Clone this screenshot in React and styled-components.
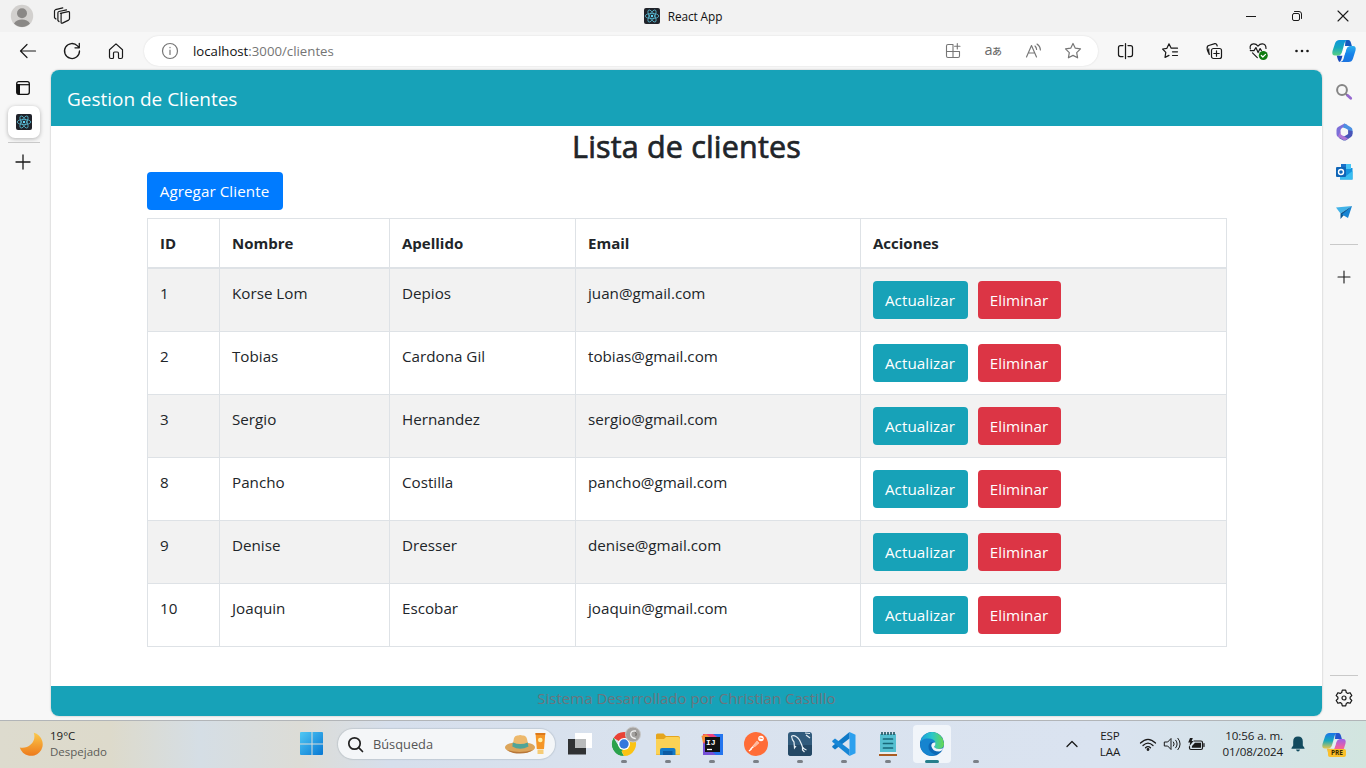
import React from "react";
import styled, { createGlobalStyle } from "styled-components";

const GlobalStyle = createGlobalStyle`
  *, *::before, *::after { box-sizing: border-box; }
  body {
    margin: 0;
    font-family: "Open Sans", "Noto Sans", sans-serif;
    color: #212529;
    overflow: hidden;
  }
  svg { display: block; flex: none; overflow: visible; }
  h2, p { margin: 0; }
`;

const Screen = styled.div`
  width: 1366px;
  height: 768px;
  display: flex;
  flex-direction: column;
  background: #f7f7f7;
  white-space: nowrap;
`;

/* ---------- browser chrome ---------- */

const TitleBar = styled.header`
  height: 32px;
  flex: none;
  display: grid;
  grid-template-columns: 1fr auto 1fr;
  align-items: center;
  background: #f2f2f2;
`;

const TitleLeft = styled.div`
  display: flex;
  align-items: center;
  gap: 19px;
  padding-left: 10px;
`;

const TitleCenter = styled.div`
  display: flex;
  align-items: center;
  gap: 8px;
  font-size: 11.8px;
  letter-spacing: -0.08px;
  color: #111;
`;

const WindowControls = styled.div`
  display: flex;
  justify-content: flex-end;
`;

const IconSlot = styled.span`
  width: ${(p) => p.$w || 44}px;
  height: ${(p) => (p.$h ? `${p.$h}px` : "auto")};
  flex: none;
  display: flex;
  align-items: center;
  justify-content: center;
`;

const ToolBar = styled.nav`
  height: 38px;
  flex: none;
  display: flex;
  align-items: center;
  padding-left: 6px;
`;

const AddressBar = styled.div`
  width: 954px;
  height: 30px;
  margin: 0 6px;
  display: flex;
  align-items: center;
  padding: 0 5px 0 18px;
  border-radius: 15px;
  background: #fff;
  box-shadow: 0 0 2px rgba(0, 0, 0, 0.12);
`;

const Url = styled.span`
  flex: 1;
  margin-left: 15px;
  font-size: 13.2px;
  letter-spacing: 0.01px;
  color: #757575;
  b { font-weight: 400; color: #111; }
`;

const Middle = styled.div`
  height: 650px;
  flex: none;
  display: flex;
`;

const LeftRail = styled.aside`
  width: 51px;
  padding: 10px 3px 0 0;
  display: flex;
  flex-direction: column;
  align-items: center;
`;

const RailIcon = styled.span`
  height: ${(p) => p.$h}px;
  margin-right: 2px;
  display: flex;
  align-items: center;
`;

const ActiveTab = styled.div`
  width: 32px;
  height: 32px;
  margin: 10px 0 4px;
  display: flex;
  align-items: center;
  justify-content: center;
  border-radius: 7px;
  background: #fff;
  box-shadow: 0 1px 4px rgba(0, 0, 0, 0.28);
`;

const Divider = styled.div`
  width: ${(p) => p.$w}px;
  height: 1px;
  flex: none;
  background: #c9c9c9;
`;

const RightRail = styled.aside`
  width: 44px;
  display: flex;
  flex-direction: column;
  align-items: center;
  padding-top: 2px;
`;

const Spacer = styled.div`
  flex: 1;
`;

/* ---------- web page ---------- */

const Page = styled.main`
  width: 1271px;
  height: 646px;
  display: flex;
  flex-direction: column;
  border-radius: 8px;
  overflow: hidden;
  background: #fff;
  box-shadow: 0 0 2px rgba(0, 0, 0, 0.3);
`;

const NavBar = styled.div`
  height: 56px;
  flex: none;
  padding: 0 16px;
  line-height: 58px;
  font-size: 19px;
  letter-spacing: -0.02px;
  color: #fff;
  background: #17a2b8;
`;

const Container = styled.section`
  width: 1080px;
  margin: 0 auto;
  flex: 1;
`;

const Heading = styled.h2`
  height: 46px;
  line-height: 41px;
  text-align: center;
  font-size: 30.5px;
  letter-spacing: 0.17px;
  font-weight: 500;
  -webkit-text-stroke: 0.7px #212529;
`;

const tones = { primary: "#007bff", info: "#17a2b8", danger: "#dc3545" };

const Button = styled.button`
  width: ${(p) => p.$w}px;
  height: 38px;
  padding: 0;
  border: 0;
  border-radius: 4px;
  background: ${(p) => tones[p.$tone]};
  color: #fff;
  font: 400 15.2px/39px "Open Sans", "Noto Sans", sans-serif;
  letter-spacing: 0.07px;
  display: block;
  text-align: center;
`;

const Actions = styled.div`
  display: flex;
  gap: 10px;
`;

const Table = styled.table`
  width: 1080px;
  margin-top: 8px;
  table-layout: fixed;
  border-collapse: separate;
  border-spacing: 0;
  border: solid #dee2e6;
  border-width: 1px 0 0 1px;
  font-size: 15.2px;
  line-height: 24px;
`;

const Th = styled.th`
  width: ${(p) => p.$w}px;
  height: 50px;
  padding: 12px 12px 12px 12.5px;
  text-align: left;
  vertical-align: top;
  font-weight: 700;
  font-size: 15px;
  border: solid #dee2e6;
  border-width: 0 1px 2px 0;
`;

const Td = styled.td`
  height: 63px;
  padding: 12px 12px 12px 12.5px;
  vertical-align: top;
  border: solid #dee2e6;
  border-width: 0 1px 1px 0;
  &:last-child { padding-left: 12px; }
`;

const Tr = styled.tr`
  &:nth-child(odd) { background: #f2f2f2; }
`;

const PageFooter = styled.footer`
  height: 30px;
  flex: none;
  line-height: 25px;
  text-align: center;
  font-size: 15px;
  color: #6c757d;
  background: #17a2b8;
`;

/* ---------- taskbar ---------- */

const TaskBar = styled.footer`
  height: 48px;
  flex: none;
  display: flex;
  align-items: center;
  padding-bottom: 1px;
  border-top: 1px solid #b2b5b8;
  background: linear-gradient(90deg, #dddbce 0, #dddacb 110px, #d5dee5 200px, #dcdcd6 300px, #d6dfec 390px, #d9e2ee 640px, #dae3f0 1100px, #d5e3e9 1240px, #d2e5df 1366px);
`;

const Weather = styled.div`
  width: 290px;
  display: flex;
  align-items: center;
  padding-left: 19px;
  gap: 7px;
  font-size: 11.5px;
  line-height: 16px;
  color: #1b1b1b;
  span { display: block; color: #5c5c58; }
`;

const SearchBox = styled.div`
  width: 217px;
  height: 30px;
  margin: 0 3px 0 4px;
  display: flex;
  align-items: center;
  padding: 0 8px 0 10px;
  border-radius: 15px;
  background: #f4f6f8;
  box-shadow: 0 0 1px 1px rgba(120, 130, 140, 0.22);
  font-size: 12.8px;
  color: #555;
  span { flex: 1; margin-left: 10px; }
`;

const DockItem = styled.div`
  width: 38px;
  height: 38px;
  margin: 0 3px;
  position: relative;
  display: flex;
  align-items: center;
  justify-content: center;
  border-radius: 4px;
  background: ${(p) => (p.$active ? "#f1f5fa" : "transparent")};
  &::after {
    content: "";
    position: absolute;
    bottom: 0;
    left: 50%;
    width: ${(p) => (p.$active ? 14 : 6)}px;
    height: 3px;
    transform: translateX(-50%);
    border-radius: 2px;
    background: ${(p) => (p.$active ? "#257f8c" : "#7b8087")};
    display: ${(p) => (p.$idle ? "none" : "block")};
  }
`;

const Tray = styled.div`
  flex: 1;
  display: flex;
  align-items: center;
  justify-content: flex-end;
  padding-right: 20px;
  color: #1b1b1b;
`;

const TrayChevron = styled.span`
  margin-right: 2px;
`;

const TrayText = styled.div`
  width: ${(p) => p.$w}px;
  text-align: ${(p) => p.$align};
  font-size: 11.6px;
  letter-spacing: -0.1px;
  line-height: 16px;
`;

/* ---------- icons ---------- */

const Line = ({ w = 16, h = w, vb, c = "#1a1a1a", sw = 1, children }) => (
  <svg width={w} height={h} viewBox={vb || `0 0 ${w} ${h}`} fill="none" stroke={c} strokeWidth={sw} strokeLinecap="round" strokeLinejoin="round">
    {children}
  </svg>
);

const Avatar = () => (
  <svg width="24" height="24" viewBox="0 0 24 24">
    <circle cx="12" cy="12" r="11.2" fill="#d2d0ce" />
    <circle cx="12" cy="9.3" r="5" fill="#8a8886" />
    <path d="M4 19.6C5.5 16.7 8.6 15.6 12 15.6s6.5 1.1 8 4A11.2 11.2 0 0 1 4 19.6Z" fill="#8a8886" />
  </svg>
);

const Workspaces = () => (
  <Line w={18} sw={1.2}>
    <path d="M7.2 6.8 15 5q1.3-.2 1.3 1v6q0 1-.9 1.5l-6.2 3Q8 17 7.9 15.800V8q0-1 .9-1.300" transform="translate(.2 -.4)" />
    <path d="M6 14.500 4.900 13.500V5.800q0-1 1-1.300L13.500 2.800" />
    <path d="M3 12 1.500 10.800V4q0-1 1-1.300L9.800.8" />
  </Line>
);

const ReactLogo = () => (
  <svg width="16" height="16" viewBox="0 0 16 16" fill="none" stroke="#58b8d0" strokeWidth=".8">
    <rect width="16" height="16" rx="2" fill="#20232a" stroke="none" />
    <ellipse cx="8" cy="8" rx="6.800" ry="2.600" />
    <ellipse cx="8" cy="8" rx="6.800" ry="2.600" transform="rotate(60 8 8)" />
    <ellipse cx="8" cy="8" rx="6.800" ry="2.600" transform="rotate(120 8 8)" />
    <circle cx="8" cy="8" r="1.200" fill="#61dafb" stroke="none" />
  </svg>
);

const Minimize = () => <Line w={10}><path d="M0 5.500h10" strokeLinecap="butt" /></Line>;
const Restore = () => (
  <Line w={10}>
    <rect x=".5" y="2.500" width="7" height="7" rx="1.500" />
    <path d="M2.500.500H7Q9.500.500 9.500 3v4.500" />
  </Line>
);
const Close = () => <Line w={10} sw={1.1}><path d="m0 0 10 10M10 0 0 10" /></Line>;

const Back = () => <Line sw={1.2}><path d="M15.500 8H.500M7 1.500.500 8 7 14.500" /></Line>;
const Refresh = () => <Line sw={1.300}><path d="M15.500 8A7.500 7.500 0 1 1 13.500 2.900L15.300 4.800M15.300.500v4.300H11" /></Line>;
const HomeIcon = () => (
  <Line sw={1.200}><path d="M1.500 6.800 8 .900l6.500 5.900v7.200q0 1.500-1.500 1.500h-1.500q-1 0-1-1v-4Q10.500 9 9.300 9H6.700Q5.500 9 5.500 10.500v4q0 1-1 1H3Q1.500 15.500 1.500 14Z" /></Line>
);
const Info = () => (
  <Line c="#767676" sw={1.200}><circle cx="8" cy="8" r="7.500" /><path d="M8 7.200v4.300M8 4.400v.3" /></Line>
);
const AppsAdd = () => (
  <Line c="#767676" sw={1.100}>
    <path d="M8 1.500H3Q1.500 1.500 1.500 3v10q0 1.500 1.500 1.500h10q1.500 0 1.500-1.500V8.500h-13M8 1.500v13M12.300.500v5.400M9.600 3.200H15" />
  </Line>
);
const TranslateIcon = () => (
  <svg width="18" height="16" viewBox="0 0 18 16" fill="#6b6b6b">
    <text x=".5" y="12" fontFamily="Open Sans, sans-serif" fontSize="14.500">a</text>
    <text x="8" y="11.500" fontFamily="Noto Sans CJK JP, sans-serif" fontSize="10" fontWeight="500">あ</text>
  </svg>
);
const ReadAloud = () => (
  <Line c="#767676" sw={1.150}>
    <path d="M1.500 14 6.500 2.500l5 11.500M3.300 10h6.400M10 3q1.500 1.500 1.600 3.500M12 1q3.300 2.300 3.400 6" />
  </Line>
);
const Star = () => (
  <Line w={16} c="#767676" sw={1.200}>
    <path d="m8 .500 2.300 4.700 5.200.700-3.800 3.700.900 5.200L8 12.400l-4.600 2.400.900-5.200L.500 5.900l5.200-.700Z" />
  </Line>
);
const Split = () => (
  <Line sw={1.250}><path d="M5 2.500H2.500Q.500 2.500.500 4.500v7q0 2 2 2H5M10 2.500h2.500q2 0 2 2v7q0 2-2 2H10M7.500.500v15" /></Line>
);
const Favorites = () => (
  <Line sw={1.200}>
    <path d="M9.200 5.200h6.300M10.500 8.800h5M10.500 12.500h5M9.200 5.200 7 .800 4.900 5.300.600 6l3.200 3.300-.800 5.100 4-2" />
  </Line>
);
const Collections = () => (
  <Line sw={1.200}>
    <rect x="5.500" y="5.500" width="10" height="10" rx="2" />
    <path d="M10.500 7.800v5.400M7.800 10.500h5.400M3.300 11.500 1.600 7.800Q.400 4.300 2 2.800L8.800.600q1.500-.300 2 1.100l.400 1.300M3.300 11.500Q2.200 8 2.800 5.800" />
  </Line>
);
const Heart = () => (
  <svg width="18" height="18" viewBox="0 0 18 18" fill="none" stroke="#1a1a1a" strokeWidth="1.200" strokeLinecap="round" strokeLinejoin="round">
    <path d="M1.300 7Q.300 2.300 4.500 1.900q2.500-.200 4.500 2.200Q11 1.700 13.500 1.900q3.500.300 3.500 4.500M1.300 8.600H5l1.900-3 2.200 5 2-4 1.300 2M3.500 10.900l4.800 4.700" />
    <circle cx="14.300" cy="13.500" r="4.500" fill="#107c10" stroke="none" />
    <path d="m12.300 13.500 1.500 1.500 2.700-2.700" stroke="#fff" />
  </svg>
);
const Dots = () => (
  <svg width="14" height="4" viewBox="0 0 14 4" fill="#1a1a1a"><circle cx="1.500" cy="2" r="1.300" /><circle cx="7" cy="2" r="1.300" /><circle cx="12.500" cy="2" r="1.300" /></svg>
);

const Copilot = ({ id, size = 24, pink }) => (
  <svg width={size} height={size} viewBox="0 0 24 24">
    <defs>
      <linearGradient id={`${id}a`} x1="0" y1="0" x2="0" y2="1">
        <stop stopColor={pink ? "#1b75e8" : "#0d95dc"} /><stop offset=".5" stopColor="#16a9bd" /><stop offset="1" stopColor={pink ? "#e5c64c" : "#59d083"} />
      </linearGradient>
      <linearGradient id={`${id}b`} x1="0" y1="0" x2="0" y2="1">
        <stop stopColor={pink ? "#9b62e8" : "#2dafee"} /><stop offset=".5" stopColor={pink ? "#ee5fa3" : "#1683ea"} /><stop offset="1" stopColor={pink ? "#f68a4e" : "#1c74e0"} />
      </linearGradient>
    </defs>
    <path d="M13.500 1h3Q18 1 18.700 3l1.200 4H13Z" fill={pink ? "#2456ce" : "#145abf"} />
    <path d="M10.500 16.500 9.500 20q-.7 3-3.500 3H9q-2.500 0-3.300-3l-1-3.500Z" fill={pink ? "#f0bc42" : "#1648b8"} />
    <path d="M7.500 1h8q-2.200 0-3 3L10 13q-.8 3.500-4.500 3.500H3Q-.5 16.500.5 12L3 4.500Q4 1 7.500 1Z" fill={`url(#${id}a)`} />
    <path d="M16.500 23h-8q2.200 0 3-3L14 10.500Q15 7 18.500 7H21q3.500 0 2.500 4.500L21 19.500Q20 23 16.500 23Z" fill={`url(#${id}b)`} />
    <path d="M13.200 7h4.300q-2.300.4-2.900 2.600L13 14.700q-.7 1.800-2.300 1.800H7q2.400-.3 3.100-2.400l2-5.800Q12.500 7.100 13.200 7Z" fill={pink ? "#e3eef2" : "#fff"} />
  </svg>
);
const SideSearch = () => (
  <svg width="16" height="16" viewBox="0 0 16 16" fill="none">
    <circle cx="6" cy="6" r="4.900" stroke="#858585" strokeWidth="2" />
    <path d="m10 10 2 2" stroke="#777" strokeWidth="2" />
    <path d="m11.700 11.500 3 2.800" stroke="#9668cf" strokeWidth="2.800" strokeLinecap="round" />
  </svg>
);
const M365 = () => (
  <svg width="17" height="18" viewBox="0 0 17 18">
    <path d="M8.500.500 2 4Q.500 5 .500 7v4q0 2 1.500 3l2.500 1.500V7.500Q4.500 6 6 5l5.500-3Z" fill="#7d6fd8" />
    <path d="m8.500.500 6 3.500q2 1 2 3v4l-5-3.500V6.300L7 4.500Z" fill="#4b90e2" />
    <path d="M16.500 8v3q0 2-1.500 3l-4.500 3q-2 1-4 0L3 15l6.500-3 2-1.500V7Z" fill="#4a55b8" />
    <path d="m2 13.500 4.500 3q2 1 4 0l1.500-1-5.500-3-2-1.500V8Z" fill="#ae76d6" />
    <path d="M8.500 5.300 12.100 7.200v3.900L8.500 13.200 4.900 11.100V7.200Z" fill="#f7f7f7" />
  </svg>
);
const Outlook = () => (
  <svg width="17" height="16" viewBox="0 0 17 16">
    <path d="M5 0h10v4h1.500v11.500H4V4H5Z" fill="#1593df" />
    <path d="M5 0h5v5H5Z" fill="#1870c9" /><path d="M10 0h5v5h-5Z" fill="#48c5f5" /><path d="m4 9 6 3 6.500-5v8.500H4Z" fill="#38bdf0" />
    <rect y="3" width="10" height="10" rx="1" fill="#0f65b7" />
    <circle cx="5" cy="8" r="2.500" fill="none" stroke="#fff" strokeWidth="1.400" />
  </svg>
);
const Drop = () => (
  <svg width="16" height="13" viewBox="0 0 16 13">
    <path d="M0 1.500 16 0 4.500 7.500Z" fill="#42b3e8" /><path d="M16 0 4.500 7.500V13l3-3.500Z" fill="#0a5793" /><path d="M16 0 12 12 6 8.500Z" fill="#1684d3" />
  </svg>
);
const Plus = ({ s = 13 }) => <Line w={s} vb="0 0 13 13" sw={1.200}><path d="M6.500 0v13M0 6.500h13" /></Line>;
const TabsIcon = () => (
  <svg width="14" height="14" viewBox="0 0 14 14"><rect x=".7" y=".7" width="12.600" height="12.600" rx="2" fill="none" stroke="#111" strokeWidth="1.300" /><path d="M1 3.700h12.500" stroke="#111" strokeWidth="1.200" /><path d="M1 3h3v10.500H2L1 12.500Z" fill="#111" /></svg>
);
const Gear = () => (
  <Line w={18} sw={1.200}>
    <path d="M7.300 1.200h3.400l.6 2.300 1.500.9 2.300-.7 1.700 2.900-1.700 1.600v1.600l1.700 1.600-1.700 2.900-2.300-.7-1.500.9-.6 2.300H7.300l-.6-2.300-1.500-.9-2.300.7-1.700-2.900 1.700-1.600V8.200L1.200 6.600l1.700-2.900 2.300.7 1.500-.9Z" />
    <circle cx="9" cy="9" r="2" />
  </Line>
);

const Moon = () => (
  <svg width="24" height="24" viewBox="0 0 24 24">
    <defs><linearGradient id="moon" x1="0" y1="0" x2="0" y2="1"><stop stopColor="#fbc94a" /><stop offset="1" stopColor="#ed7a1c" /></linearGradient></defs>
    <path d="M14.800.800A11.700 11.700 0 1 1 .800 15.500C8.500 17.500 18 10.500 14.800.800Z" fill="url(#moon)" />
  </svg>
);
const Windows = () => (
  <svg width="24" height="24" viewBox="0 0 24 24">
    <defs><linearGradient id="win" x1="0" y1="0" x2="1" y2="1" gradientUnits="objectBoundingBox"><stop stopColor="#4fc8f4" /><stop offset="1" stopColor="#0877d3" /></linearGradient></defs>
    <path d="M1 0h10.500v11.500H0V1Q0 0 1 0ZM12.500 0H22q1 0 1 1v10.500H12.500ZM0 12.500h11.500V23H1q-1 0-1-1ZM12.500 12.500H23V22q0 1-1 1h-9.500Z" fill="url(#win)" />
  </svg>
);
const Magnifier = () => <Line w={15} sw={1.700} c="#222"><circle cx="6.500" cy="6.500" r="5.700" /><path d="m10.700 10.700 3.800 3.800" /></Line>;
const HatArt = () => (
  <svg width="42" height="22" viewBox="0 0 42 22">
    <ellipse cx="15" cy="14.500" rx="15" ry="5.500" fill="#dca55b" />
    <path d="M7.500 13 9 5q1-3 4-2.500 2-1 4.500 0Q21 2 22 6l1.500 7q-8 4-16 0Z" fill="#edb96d" />
    <path d="m7.800 9.500-.5 4q7.700 4.500 16.200 0l-.8-4q-7.200 3-14.900 0Z" fill="#50a497" />
    <path d="M2 17q12 4 26 0-5 3.500-13 3.500T2 17Z" fill="#b87738" />
    <path d="M30.500 0h9.800L39 16h-7.200Z" fill="#f59627" /><path d="M32.500 16.500h6V21h-6Z" fill="#f6cc76" /><circle cx="35.300" cy="7" r="2.300" fill="#fff0a5" />
    <path d="M30.500 0h9.800l-.2 2h-9.400Z" fill="#dc791b" />
  </svg>
);
const TaskView = () => (
  <svg width="26" height="24" viewBox="0 0 26 24"><rect x="8" y="1" width="17" height="15" fill="#fff" /><rect x="1" y="7" width="18" height="15.500" fill="#303234" /><rect x="8" y="7" width="11" height="9" fill="#b9bbbc" /></svg>
);
const Chrome = () => (
  <svg width="26" height="26" viewBox="0 0 26 26">
    <path d="M13 13 2.600 7A12 12 0 0 1 23.400 7H13Z" fill="#e94235" /><path d="M13 13 23.400 7A12 12 0 0 1 13 25Z" fill="#fbc313" /><path d="M2.600 7 8 16l5 9A12 12 0 0 1 2.600 7Z" fill="#2ba24c" /><path d="m13 25 6-10H8Z" fill="#fbc313" /><path d="m2.600 7 5.400 9 5 1-5 7Q-2 18 2.600 7Z" fill="#2ba24c" />
    <circle cx="13" cy="13" r="6" fill="#fff" /><circle cx="13" cy="13" r="4.700" fill="#3478dd" />
    <circle cx="22" cy="3.500" r="7.500" fill="#a3a19f" stroke="#c9c9c9" />
    <path d="M24.500 0q-4.500-.5-4.800 3t4.500 4.500" fill="none" stroke="#f0f0f0" strokeWidth="1.300" strokeLinecap="round" />
    <path d="M24.500 1.500q1.500 1 .5 3" fill="none" stroke="#5f5a56" strokeLinecap="round" />
  </svg>
);
const Folder = () => (
  <svg width="24" height="22" viewBox="0 0 24 22"><path d="M0 2Q0 .500 1.500.500h6L10 3H22q2 0 2 2v16q0 1-1 1H1q-1 0-1-1Z" fill="#e5a51d" /><path d="M0 6h8l2-2h12q2 0 2 2v14.500q0 1-1 1H1q-1 0-1-1Z" fill="#fbd255" /><path d="M4 22v-5q0-2 2-2h11.500q2 0 2 2v5Z" fill="#147ac8" /><path d="M7 18h9.500v4H7Z" fill="#0b5ba4" /></svg>
);
const IntelliJ = () => (
  <svg width="23" height="23" viewBox="0 0 23 23"><path d="M2 1h20v21H2Z" fill="#2475ee" /><path d="M2 1h10l7 5-8 3-9 2Z" fill="#ef417d" /><path d="M.500 3 5 1l4 3-7 6Z" fill="#f68c34" /><path d="M2 10 15 22H2Z" fill="#7651d7" /><rect x="4" y="4" width="15" height="15" fill="#111" /><text x="5" y="12" fill="#fff" fontFamily="Liberation Mono, monospace" fontWeight="700" fontSize="8">IJ</text><path d="M6 16.500h5" stroke="#fff" strokeWidth="1.300" /></svg>
);
const Postman = () => (
  <svg width="24" height="24" viewBox="0 0 24 24"><circle cx="12" cy="12" r="12" fill="#ff6c37" /><circle cx="17" cy="6.500" r="2.800" fill="#fff" /><path d="m6 17 7-8 2 2-8 6.500Z" fill="#fff" /><path d="m13 9 2 2-4 4H8Z" fill="#ffb99e" /><path d="m5 19 2.500-2" stroke="#fff" strokeWidth="1.500" /><path d="m15.500 6 3 .500" stroke="#ff6c37" /></svg>
);
const MySQL = () => (
  <svg width="24" height="24" viewBox="0 0 24 24"><rect width="24" height="24" rx="3" fill="#315b7c" /><path d="M0 13h24v8q0 3-3 3H3q-3 0-3-3Z" fill="#244865" /><path d="M3.500 4q4-1.500 8 4 2 4 3 7 1 2 4 3M3.500 4q.5 4 2.500 6l.5 6 1.500-2M14.500 15v3l2 2M18 3l4 3M17 1l5 .500" fill="none" stroke="#e8f0f5" strokeWidth="1.200" /></svg>
);
const VSCode = () => (
  <svg width="24" height="24" viewBox="0 0 24 24"><path d="m17.500 0 6 2.800v18.400l-6 2.800Z" fill="#2ca0ee" /><path d="M17.500 0v6.500L3 17.500l-2.700-2.300Q0 14.500.5 14Z" fill="#0e79c7" /><path d="M17.500 24v-6.500L3 6.500.300 8.800Q0 9.500.5 10Z" fill="#1686d6" /></svg>
);
const Notepad = () => (
  <svg width="18" height="25" viewBox="0 0 18 25"><rect x="1" y="2" width="16" height="18" fill="#55bfd0" /><path d="M0 20h18v2H0Z" fill="#e9eef0" /><path d="M0 23h18" stroke="#a95c22" strokeWidth="2" /><path d="M3 0v3M6 0v3M9 0v3M12 0v3M15 0v3" stroke="#285a66" strokeWidth="1.700" /><path d="M4.500 7h9M4.500 11.500h9M4.500 16h9" stroke="#176879" strokeWidth="1.700" strokeLinecap="round" /></svg>
);
const Edge = () => (
  <svg width="24" height="24" viewBox="0 0 24 24">
    <defs><linearGradient id="edge" x1="0" x2="1"><stop stopColor="#199edb" /><stop offset=".5" stopColor="#2bc7c9" /><stop offset="1" stopColor="#69d84f" /></linearGradient></defs>
    <circle cx="12" cy="12" r="12" fill="#0b67b5" /><path d="M.2 10A12 12 0 0 1 24 11.500q0 5-5.500 5.500-3.500 0-4.500-2 2-2 1-4.500Q13 7 8 8 3 8.500.2 10Z" fill="url(#edge)" /><path d="M0 12q1-5 6.500-5.500Q14 6 15.500 10.500q-6-2-7 3.500-.5 6 6.500 8.500-2 1.500-5 1.300A12 12 0 0 1 0 12Z" fill="#1684cf" /><path d="M15.300 10.500q-4-.500-4 3.500 1 5.500 8 5.500 2-.200 4-2.500.500-.8-.3-.800-6 2-9-1.200 2-2 1.300-4.500Z" fill="#f1f5fa" />
  </svg>
);
const Chevron = () => <Line w={12} h={8} sw={1.300}><path d="m1 6.500 5-5 5 5" /></Line>;
const Wifi = () => <Line w={16} h={13} sw={1.250}><path d="M.500 5q7.500-7.500 15 0M3 7.500q5-4.800 10 0M5.500 9.800q2.500-2.300 5 0" /><circle cx="8" cy="11.500" r=".8" fill="#1a1a1a" /></Line>;
const Volume = () => <Line w={17} h={14}><path d="M.700 5h3L7 1.500v11L3.700 9h-3ZM9.500 5q1.500 2 0 4M11.700 3.200q3 3.800 0 7.600M13.900 1.300q4.600 5.700 0 11.400" /></Line>;
const Battery = () => (
  <Line w={17} h={13} sw={1.200}><path d="M6 3h7q1.500 0 1.500 1.500v5.500q0 1.500-1.500 1.500H3Q1.500 11.500 1.500 10V8.500M16 5.500v3" /><path d="M7 4.700h6v5H3.800L4 8Z" fill="#1a1a1a" stroke="none" /><path d="M2 0 .200 4.500h2L1.500 8 5.500 3H3.700L4.800 0Z" fill="#1a1a1a" stroke="none" /></Line>
);
const Bell = () => (
  <svg width="14" height="16" viewBox="0 0 14 16" fill="#124a5e"><path d="M7 .500q4.800 0 4.800 5v4L13.500 12v.800H.500V12l1.700-2.500v-4q0-5 4.800-5ZM5 13.500h4Q8.500 15.500 7 15.500T5 13.500Z" /></svg>
);

const PreBadge = styled.span`
  position: absolute;
  left: 6px;
  bottom: -1px;
  width: 18px;
  height: 8px;
  border-radius: 2px;
  background: #fbc02b;
  color: #3a2a00;
  font: 700 6.5px/8px "Open Sans", sans-serif;
  text-align: center;
`;
const CopilotButton = styled.span`
  position: relative;
  width: 24px;
  height: 24px;
  margin-left: 9px;
`;

/* ---------- content ---------- */

const columns = [["ID", 72], ["Nombre", 170], ["Apellido", 186], ["Email", 285], ["Acciones", 366]];

const clients = [
  [1, "Korse Lom", "Depios", "juan@gmail.com"],
  [2, "Tobias", "Cardona Gil", "tobias@gmail.com"],
  [3, "Sergio", "Hernandez", "sergio@gmail.com"],
  [8, "Pancho", "Costilla", "pancho@gmail.com"],
  [9, "Denise", "Dresser", "denise@gmail.com"],
  [10, "Joaquin", "Escobar", "joaquin@gmail.com"],
];

const ClientTable = () => (
  <Table>
    <thead>
      <tr>{columns.map(([name, w]) => <Th key={name} $w={w}>{name}</Th>)}</tr>
    </thead>
    <tbody>
      {clients.map((row) => (
        <Tr key={row[0]}>
          {row.map((value) => <Td key={value}>{value}</Td>)}
          <Td>
            <Actions>
              <Button $tone="info" $w={95}>Actualizar</Button>
              <Button $tone="danger" $w={83}>Eliminar</Button>
            </Actions>
          </Td>
        </Tr>
      ))}
    </tbody>
  </Table>
);

const dockApps = [Chrome, Folder, IntelliJ, Postman, MySQL, VSCode, Notepad];

export default function App() {
  return (
    <Screen>
      <GlobalStyle />
      <TitleBar>
        <TitleLeft><Avatar /><Workspaces /></TitleLeft>
        <TitleCenter><ReactLogo />React App</TitleCenter>
        <WindowControls>
          <IconSlot $w={46}><Minimize /></IconSlot>
          <IconSlot $w={46}><Restore /></IconSlot>
          <IconSlot $w={46}><Close /></IconSlot>
        </WindowControls>
      </TitleBar>

      <ToolBar>
        <IconSlot><Back /></IconSlot>
        <IconSlot><Refresh /></IconSlot>
        <IconSlot><HomeIcon /></IconSlot>
        <AddressBar>
          <Info />
          <Url><b>localhost</b>:3000/clientes</Url>
          <IconSlot $w={40}><AppsAdd /></IconSlot>
          <IconSlot $w={40}><TranslateIcon /></IconSlot>
          <IconSlot $w={40}><ReadAloud /></IconSlot>
          <IconSlot $w={40}><Star /></IconSlot>
        </AddressBar>
        <IconSlot><Split /></IconSlot>
        <IconSlot><Favorites /></IconSlot>
        <IconSlot><Collections /></IconSlot>
        <IconSlot><Heart /></IconSlot>
        <IconSlot><Dots /></IconSlot>
        <IconSlot $w={40}><Copilot id="side" /></IconSlot>
      </ToolBar>

      <Middle>
        <LeftRail>
          <RailIcon $h={16}><TabsIcon /></RailIcon>
          <ActiveTab><ReactLogo /></ActiveTab>
          <Divider $w={32} />
          <RailIcon $h={38}><Plus s={14} /></RailIcon>
        </LeftRail>

        <Page>
          <NavBar>Gestion de Clientes</NavBar>
          <Container>
            <Heading>Lista de clientes</Heading>
            <Button $tone="primary" $w={136}>Agregar Cliente</Button>
            <ClientTable />
          </Container>
          <PageFooter>Sistema Desarrollado por Christian Castillo</PageFooter>
        </Page>

        <RightRail>
          <IconSlot $h={40}><SideSearch /></IconSlot>
          <IconSlot $h={40}><M365 /></IconSlot>
          <IconSlot $h={40}><Outlook /></IconSlot>
          <IconSlot $h={40}><Drop /></IconSlot>
          <IconSlot $h={12} />
          <Divider $w={28} />
          <IconSlot $h={63}><Plus s={12} /></IconSlot>
          <Spacer />
          <Divider $w={28} />
          <IconSlot $h={44}><Gear /></IconSlot>
        </RightRail>
      </Middle>

      <TaskBar>
        <Weather><Moon /><div>19°C<span>Despejado</span></div></Weather>
        <IconSlot><Windows /></IconSlot>
        <SearchBox><Magnifier /><span>Búsqueda</span><HatArt /></SearchBox>
        <DockItem $idle><TaskView /></DockItem>
        {dockApps.map((Icon, i) => <DockItem key={i}><Icon /></DockItem>)}
        <DockItem $active><Edge /></DockItem>
        <DockItem />
        <Tray>
          <TrayChevron><Chevron /></TrayChevron>
          <TrayText $w={60} $align="center">ESP<br />LAA</TrayText>
          <IconSlot $w={16}><Wifi /></IconSlot>
          <IconSlot $w={32}><Volume /></IconSlot>
          <IconSlot $w={16}><Battery /></IconSlot>
          <TrayText $w={79} $align="right">10:56 a. m.<br />01/08/2024</TrayText>
          <IconSlot $w={30}><Bell /></IconSlot>
          <CopilotButton><Copilot id="task" pink /><PreBadge>PRE</PreBadge></CopilotButton>
        </Tray>
      </TaskBar>
    </Screen>
  );
}
